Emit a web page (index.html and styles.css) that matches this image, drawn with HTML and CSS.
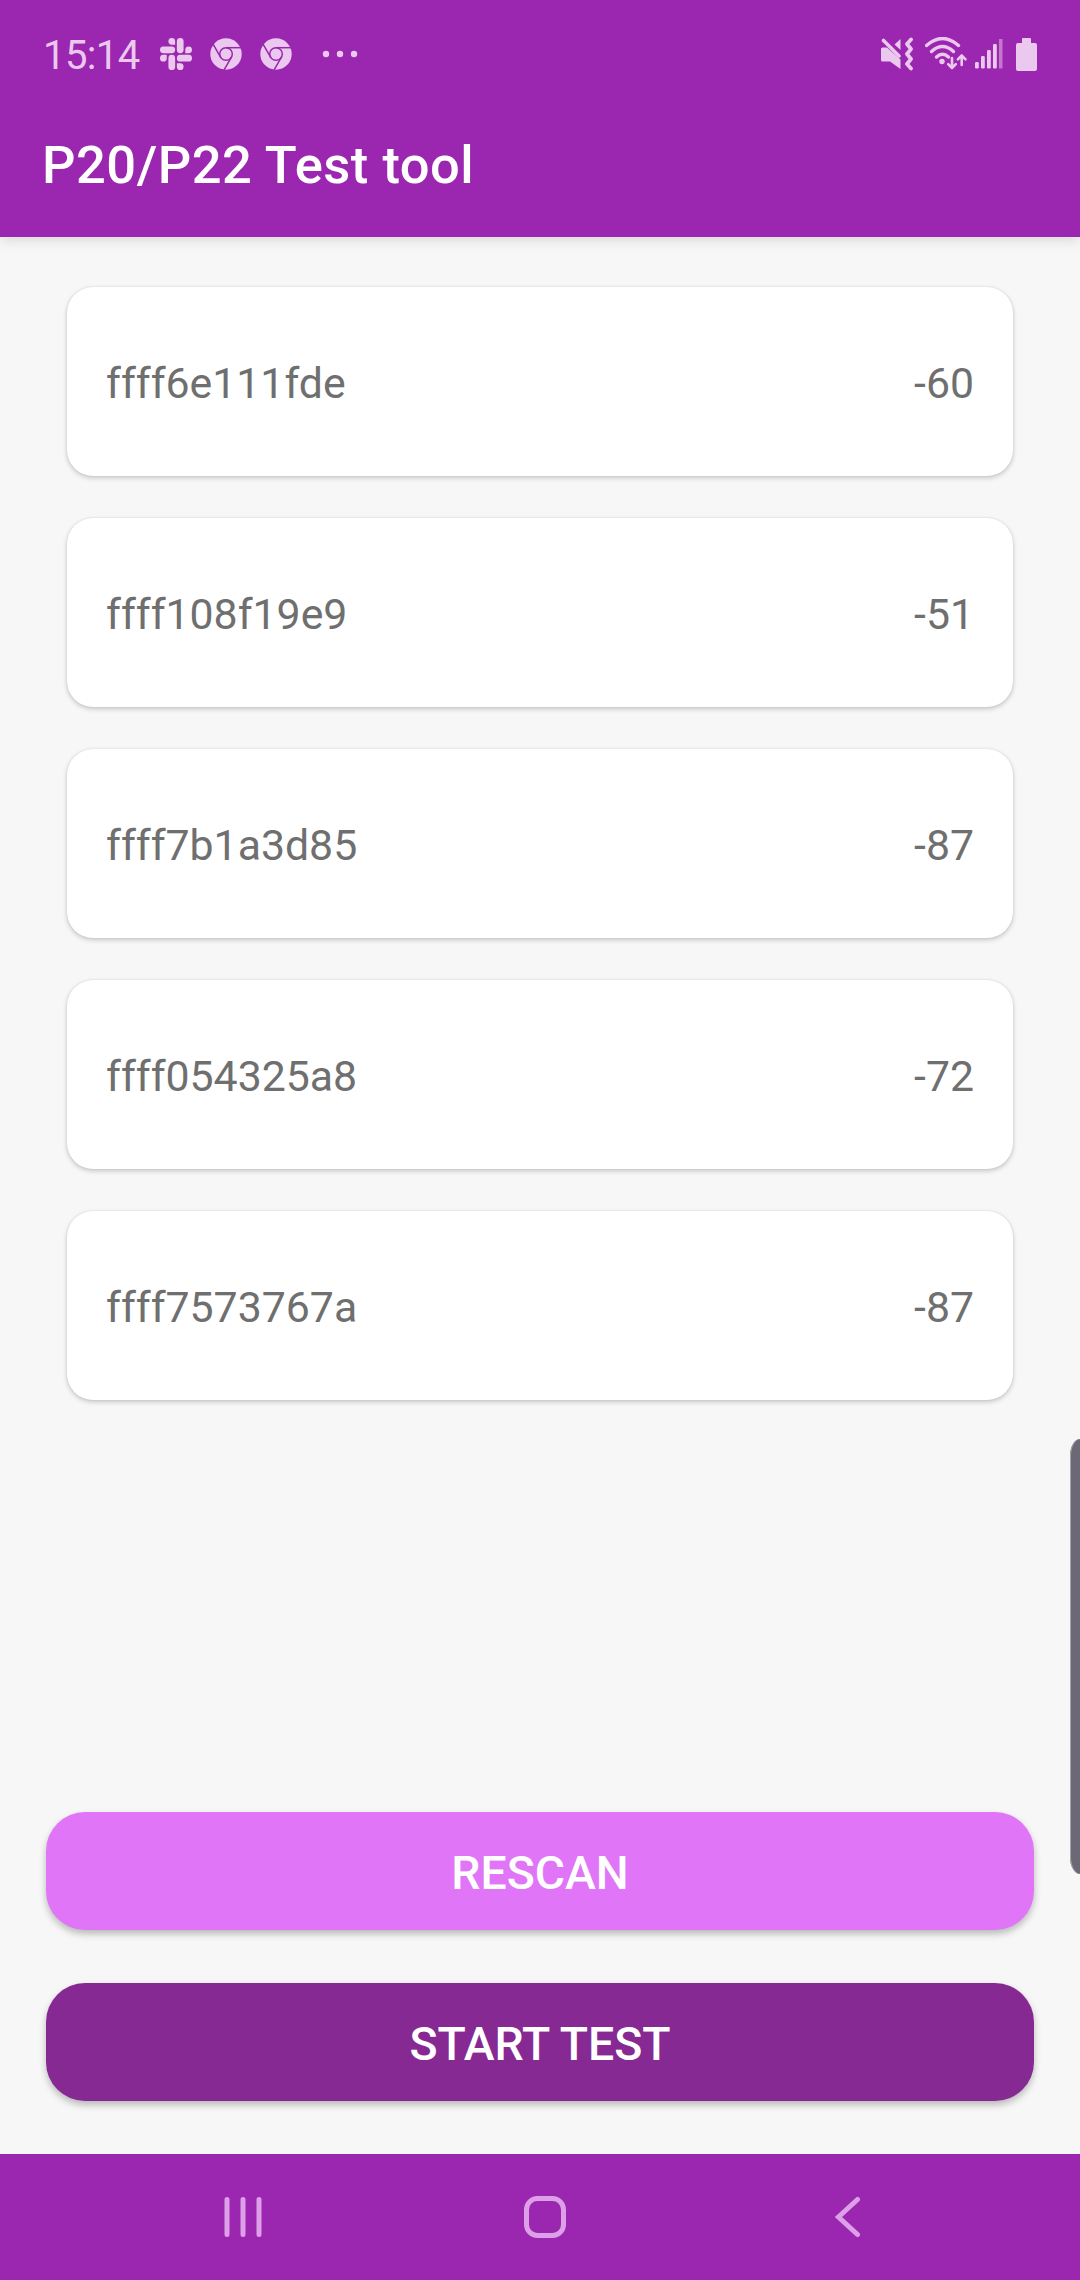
FILE: index.html
```html
<!DOCTYPE html>
<html lang="en">
<head>
<meta charset="utf-8">
<title>P20/P22 Test tool</title>
<link rel="stylesheet" href="styles.css">
</head>
<body>
<svg class="defs" width="0" height="0" aria-hidden="true">
  <symbol id="chrome" viewBox="0 0 32 32">
    <circle class="fill" cx="16" cy="16" r="15.7"/>
    <g class="cut">
      <circle cx="16" cy="16" r="6.3"/>
      <path d="M16 9.7H31"/>
      <path d="M16 9.7H31" transform="rotate(120 16 16)"/>
      <path d="M16 9.7H31" transform="rotate(240 16 16)"/>
    </g>
  </symbol>
</svg>
<header class="top">
  <div class="status">
    <span class="clock">15:14</span>
    <div class="notifications">
      <svg class="slack" viewBox="0 0 24 24"><path class="fill" d="M5.042 15.165a2.528 2.528 0 0 1-2.52 2.523A2.528 2.528 0 0 1 0 15.165a2.527 2.527 0 0 1 2.522-2.52h2.52v2.52zM6.313 15.165a2.527 2.527 0 0 1 2.521-2.52 2.527 2.527 0 0 1 2.521 2.52v6.313A2.528 2.528 0 0 1 8.834 24a2.528 2.528 0 0 1-2.521-2.522v-6.313zM8.834 5.042a2.528 2.528 0 0 1-2.521-2.52A2.528 2.528 0 0 1 8.834 0a2.528 2.528 0 0 1 2.521 2.522v2.52H8.834zM8.834 6.313a2.528 2.528 0 0 1 2.521 2.521 2.528 2.528 0 0 1-2.521 2.521H2.522A2.528 2.528 0 0 1 0 8.834a2.528 2.528 0 0 1 2.522-2.521h6.312zM18.956 8.834a2.528 2.528 0 0 1 2.522-2.521A2.528 2.528 0 0 1 24 8.834a2.528 2.528 0 0 1-2.522 2.521h-2.522V8.834zM17.688 8.834a2.528 2.528 0 0 1-2.523 2.521 2.527 2.527 0 0 1-2.52-2.521V2.522A2.527 2.527 0 0 1 15.165 0a2.528 2.528 0 0 1 2.523 2.522v6.312zM15.165 18.956a2.528 2.528 0 0 1 2.523 2.522A2.528 2.528 0 0 1 15.165 24a2.527 2.527 0 0 1-2.52-2.522v-2.522h2.52zM15.165 17.688a2.527 2.527 0 0 1-2.52-2.523 2.526 2.526 0 0 1 2.52-2.52h6.313A2.527 2.527 0 0 1 24 15.165a2.528 2.528 0 0 1-2.522 2.523h-6.313z"/></svg>
      <svg class="browser"><use href="#chrome"/></svg>
      <svg class="browser"><use href="#chrome"/></svg>
      <svg class="more" viewBox="0 0 36 8"><g class="fill"><circle cx="4" cy="4" r="3.2"/><circle cx="18" cy="4" r="3.2"/><circle cx="32" cy="4" r="3.2"/></g></svg>
    </div>
    <div class="system">
      <svg class="mute" viewBox="0 0 32 34">
        <path class="fill" d="M1.500 10.500H6L19.500 22.500V32L9 24.500H1.500Q0 24.500 0 23V12Q0 10.500 1.500 10.500ZM13.500 7.500L19.500 2V13Z"/>
        <g class="line"><path d="M2.500 3.500L18 19" stroke-width="3.600"/><path d="M30 2.500L26 7L30 12L26 17L30 22L26 27L30 31.500" stroke-width="3.800" stroke-linejoin="round"/></g>
      </svg>
      <svg class="wifi" viewBox="0 0 42 34">
        <g class="line" stroke-width="3.400"><path d="M1.500 8.500Q17.500 -5.500 33.500 8.500"/><path d="M6.500 14.500Q17.500 4.500 28.500 14.500"/><path d="M11.500 20Q17.500 14.500 23.500 20"/></g>
        <circle class="fill" cx="17" cy="24.500" r="2.700"/>
        <g class="line" stroke-width="2.600" stroke-linejoin="round"><path d="M27 21V30.500M23.200 27.200L27 31L30.800 27.200"/><path d="M36.700 28V19.500M32.900 22.300L36.700 18.500L40.500 22.300"/></g>
      </svg>
      <svg class="signal" viewBox="0 0 28 30">
        <g class="fill"><rect x="0" y="23" width="3.800" height="6.500" rx="1.300"/><rect x="6" y="17" width="3.800" height="12.500" rx="1.300"/><rect x="12" y="11" width="3.800" height="18.500" rx="1.300"/><rect x="18" y="5" width="3.800" height="24.500" rx="1.300"/></g>
        <rect class="faint" x="24" y="0" width="3.500" height="29.500"/>
      </svg>
      <svg class="battery" viewBox="0 0 21 33"><path class="fill" d="M7 0H14Q15 0 15 1V5H19Q21 5 21 7V31Q21 33 19 33H2Q0 33 0 31V7Q0 5 2 5H6V1Q6 0 7 0Z"/></svg>
    </div>
  </div>
  <h1 class="title">P20/P22 Test tool</h1>
</header>
<main class="content">
  <ul class="devices">
    <li class="device"><span>ffff6e111fde</span><span>-60</span></li>
    <li class="device"><span>ffff108f19e9</span><span>-51</span></li>
    <li class="device"><span>ffff7b1a3d85</span><span>-87</span></li>
    <li class="device"><span>ffff054325a8</span><span>-72</span></li>
    <li class="device"><span>ffff7573767a</span><span>-87</span></li>
  </ul>
  <div class="actions">
    <button class="action rescan">RESCAN</button>
    <button class="action start">START TEST</button>
  </div>
</main>
<nav class="navbar">
  <svg class="recents" viewBox="0 0 38 42"><path class="nav-line" d="M3 3.500V38.500M19 3.500V38.500M35 3.500V38.500"/></svg>
  <svg class="home" viewBox="0 0 42 42"><rect class="nav-line" x="2.500" y="2.500" width="37" height="37" rx="11"/></svg>
  <svg class="back" viewBox="0 0 26 42"><path class="nav-line" d="M22.500 3.500L3.500 21L22.500 38.500"/></svg>
</nav>
<div class="edge-handle"></div>
</body>
</html>
```
FILE: styles.css
```css
* { box-sizing: border-box; }

body {
  margin: 0;
  width: 1080px;
  height: 2280px;
  display: flex;
  flex-direction: column;
  position: relative;
  overflow: hidden;
  background: #f7f7f7;
  font-family: Roboto, sans-serif;
}

svg { display: block; flex: none; }
.defs { position: absolute; }
.fill { fill: #ebc9ef; }
.faint { fill: #c279ca; }
.line { fill: none; stroke: #ebc9ef; stroke-linecap: round; }
.cut { fill: none; stroke: #9b26af; stroke-width: 1.5; }

.top {
  height: 237px;
  background: #9b26af;
  box-shadow: 0 3px 12px rgba(0, 0, 0, 0.13);
}

.status {
  height: 108px;
  padding: 0 43px 0 43px;
  display: flex;
  align-items: center;
}

.clock {
  width: 117px;
  padding-top: 3px;
  color: #ebc9ef;
  font-size: 40px;
  letter-spacing: -0.6px;
  line-height: 48px;
  white-space: nowrap;
}

.notifications { display: flex; align-items: center; }
.slack { width: 32px; height: 32px; }
.browser { width: 32px; height: 32px; margin-left: 18px; }
.more { width: 36px; height: 8px; margin-left: 30px; }

.system { display: flex; align-items: center; margin-left: auto; }
.mute { width: 32px; height: 34px; }
.wifi { width: 42px; height: 34px; margin-left: 12px; }
.signal { width: 28px; height: 30px; margin-left: 8px; }
.battery { width: 21px; height: 33px; margin-left: 13px; }

.title {
  margin: 0;
  padding: 26px 42px 0;
  color: #fff;
  font-size: 52.5px;
  font-weight: 500;
  letter-spacing: 0.5px;
  line-height: 62px;
}

.content {
  flex: 1;
  display: flex;
  flex-direction: column;
  justify-content: space-between;
  padding: 50px 46px 53px;
}

.devices {
  margin: 0;
  padding: 0 21px;
  list-style: none;
  display: grid;
  gap: 42px;
}

.device {
  height: 189px;
  padding: 2px 39px 0;
  display: flex;
  align-items: center;
  justify-content: space-between;
  border-radius: 26px;
  background: #fff;
  color: #6f6f6f;
  font-size: 42.8px;
  box-shadow: 0 2px 5px rgba(0, 0, 0, 0.2), 0 0 2px rgba(0, 0, 0, 0.1);
}

.actions { display: grid; gap: 53px; }

.action {
  height: 118px;
  padding: 3px 0 0;
  border: 0;
  border-radius: 39px;
  color: #fff;
  font: 500 46.4px/56px Roboto, sans-serif;
  box-shadow: 0 4px 7px rgba(0, 0, 0, 0.25);
}
.rescan { background: #e076f7; }
.start { background: #862993; }

.navbar {
  height: 126px;
  padding: 0 219px 0 224px;
  display: flex;
  align-items: center;
  background: #9b26af;
}
.nav-line {
  fill: none;
  stroke: #dda0e8;
  stroke-width: 5;
  stroke-linecap: round;
}
.recents { width: 38px; height: 42px; }
.home { width: 42px; height: 42px; margin-left: 262px; }
.back { width: 26px; height: 42px; margin-left: auto; }

.edge-handle {
  position: absolute;
  top: 1439px;
  right: 0;
  width: 10px;
  height: 435px;
  border-radius: 10px 0 0 10px / 17px 0 0 17px;
  background: #6c6977;
  box-shadow: inset 1px 0 #a5a5a8;
}
```
